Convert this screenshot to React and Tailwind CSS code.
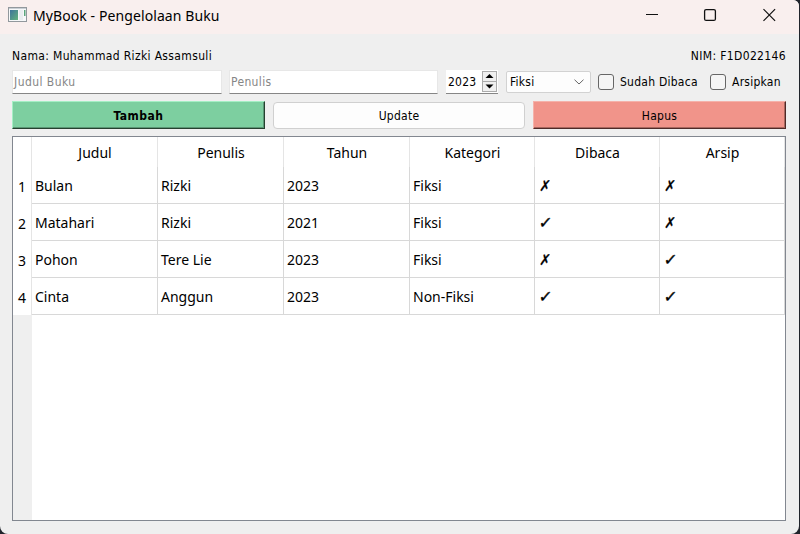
import React from "react";

const books = [
  ["Bulan", "Rizki", "2023", "Fiksi", false, false],
  ["Matahari", "Rizki", "2021", "Fiksi", true, false],
  ["Pohon", "Tere Lie", "2023", "Fiksi", false, true],
  ["Cinta", "Anggun", "2023", "Non-Fiksi", true, true],
];
const headers = ["Judul", "Penulis", "Tahun", "Kategori", "Dibaca", "Arsip"];
const columns = "grid grid-cols-[19px_126px_126px_126px_125px_125px_125px]";

function TitleBar() {
  return (
    <header className="flex h-[34px] shrink-0 items-start bg-[#f9efee] text-black">
      <svg className="ml-2 mt-[7px]" width="19" height="16" viewBox="0 0 19 16">
        <defs>
          <linearGradient id="appIcon" x1="0" y1="0" x2="1" y2="1">
            <stop offset="0" stopColor="#3d739b" />
            <stop offset="1" stopColor="#63b37c" />
          </linearGradient>
        </defs>
        <rect x="0.5" y="0.5" width="18" height="14" fill="#f6f8f9" stroke="#92989d" />
        <rect x="1" y="1" width="17" height="1" fill="#c8ced4" />
        <rect x="2" y="3" width="8" height="10" fill="url(#appIcon)" />
        <rect x="11" y="3" width="4" height="10" fill="#e9edf0" />
        <rect x="16" y="3" width="1.5" height="6" fill="#5aa57c" />
      </svg>
      <h1 className="ml-[6px] mt-[5px] whitespace-nowrap text-[14px] leading-[22px] tracking-[0.09px]">
        MyBook - Pengelolaan Buku
      </h1>
      <svg className="ml-auto mr-[22px] mt-[8px]" width="132" height="14" viewBox="0 0 132 14" fill="none" stroke="#111">
        <path d="M1 6.5h12" />
        <rect x="59.6" y="1.6" width="10.8" height="10.8" rx="1.5" strokeWidth="1.3" />
        <path d="M118.5 1.2l11.6 11.6M130.1 1.2l-11.6 11.6" strokeWidth="1.2" />
      </svg>
    </header>
  );
}

function Field({ children, className }) {
  return (
    <div className={"flex h-6 items-center border border-[#e7e7e7] border-b-[#868686] bg-white pl-[1px] text-[#868686] " + className}>
      {children}
    </div>
  );
}

function Check({ label, className }) {
  return (
    <label className={"flex items-center " + className}>
      <span className="mr-[6px] size-4 shrink-0 rounded-[3px] border border-[#666] bg-[#f5f5f5]" />
      {label}
    </label>
  );
}

export default function App() {
  return (
    <div className="h-[534px] w-[800px] overflow-hidden bg-[#20242b]">
      <div className="flex h-[534px] w-[799px] flex-col overflow-hidden rounded-tr-[6px] rounded-b-[8px] bg-[#efefef] [font-family:'Noto_Sans','Open_Sans',sans-serif] text-black">
        <TitleBar />
        <main className="flex w-[786px] flex-col pl-3">
          <div className="whitespace-nowrap text-[12px] tracking-[0.25px] [font-family:'DejaVu_Sans_Condensed','DejaVu_Sans',sans-serif]">
            <div className="mt-[14px] flex h-4 items-center justify-between tracking-[0.35px]">
              <span>Nama: Muhammad Rizki Assamsuli</span>
              <span>NIM: F1D022146</span>
            </div>
            <div className="mt-[6px] flex h-6 items-center">
              <Field className="w-[210px] tracking-[0.45px]">Judul Buku</Field>
              <Field className="ml-[7px] w-[209px] tracking-[0.35px]">Penulis</Field>
              <div className="ml-2 flex h-6 w-[52px] items-center justify-between border-b border-[#868686] bg-white pl-[2px]">
                <span>2023</span>
                <svg width="16" height="22" viewBox="0 0 16 22">
                  <rect x="0.5" y="0.5" width="14" height="10" fill="#f0f0f0" stroke="#ababab" />
                  <rect x="0.5" y="10.5" width="14" height="10" fill="#f0f0f0" stroke="#ababab" />
                  <path d="M3.5 7h8l-4-4zM3.5 13.5h8l-4 4z" fill="#000" />
                </svg>
              </div>
              <div className="ml-2 flex h-[22px] w-[85px] items-center justify-between rounded-[2px] border border-[#d2d2d2] bg-[#fdfdfd] pl-[3px] pr-[6px]">
                <span>Fiksi</span>
                <svg width="10" height="6" viewBox="0 0 10 6" fill="none" stroke="#666">
                  <path d="M0.5 0.7l4.5 4.3 4.5-4.3" />
                </svg>
              </div>
              <Check label="Sudah Dibaca" className="ml-[7px] w-[112px]" />
              <Check label="Arsipkan" />
            </div>
            <div className="mt-[7px] flex h-[28px] gap-2">
              <button className="h-[28px] w-[253px] border border-[#25412f] border-t-[#a5efc5] border-l-[#a5efc5] bg-[#7dcfa0] pt-px font-bold tracking-[0.5px] shadow-[inset_-1px_-1px_0_#5a9675]">
                Tambah
              </button>
              <button className="h-[27px] w-[252px] self-center rounded-[4px] border border-[#d0d0d0] bg-[#fdfdfd] pt-px">
                Update
              </button>
              <button className="h-[28px] w-[253px] border border-[#502a28] border-t-[#f5b2aa] border-l-[#f5b2aa] bg-[#f1948a] pt-px shadow-[inset_-1px_-1px_0_#a9675f]">
                Hapus
              </button>
            </div>
          </div>
          <div className="mt-[7px] h-[385px] w-[774px] overflow-hidden border border-[#828790] bg-white text-[14px]">
            <div className={columns + " h-[30px]"}>
              <div className="border-r border-[#e5e5e5]" />
              {headers.map((h) => (
                <div key={h} className="flex items-center justify-center border-r border-[#e5e5e5] pl-[1px]">
                  {h}
                </div>
              ))}
            </div>
            {books.map((b, i) => (
              <div key={i} className={columns + " h-[37px]"}>
                <div className="flex items-center justify-center border-r border-[#e5e5e5] pt-[1px]">{i + 1}</div>
                {b.map((v, j) => (
                  <div key={j} className="flex items-center border-r border-b border-[#d8d8d8] pl-[3px]">
                    {typeof v === "boolean" ? (
                      v ? (
                        <span className="-skew-x-6 pl-[1px] pt-[2px] text-[16px] [-webkit-text-stroke:0.4px_black] [font-family:'DejaVu_Sans',sans-serif]">✓</span>
                      ) : (
                        <span className="-skew-x-6 scale-x-90 pl-[1px] pt-[3px] text-[15px] [-webkit-text-stroke:0.2px_black] [font-family:'DejaVu_Sans',sans-serif]">✗</span>
                      )
                    ) : (
                      v
                    )}
                  </div>
                ))}
              </div>
            ))}
            <div className="h-[205px] w-[19px] bg-[#efefef]" />
          </div>
        </main>
      </div>
    </div>
  );
}
